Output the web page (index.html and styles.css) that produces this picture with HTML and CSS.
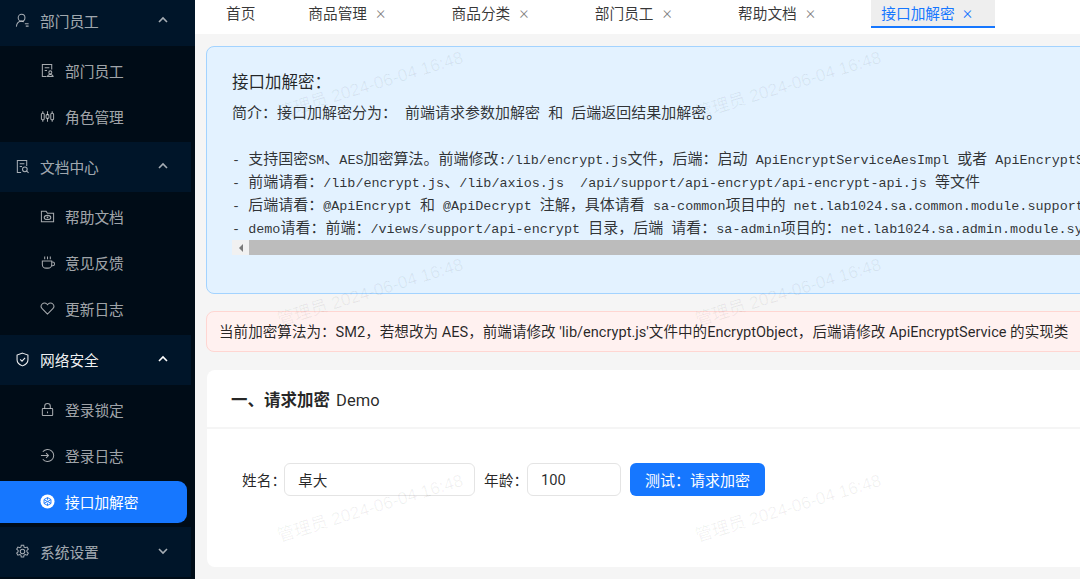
FILE: index.html
```html
<!DOCTYPE html>
<html lang="zh-CN">
<head>
<meta charset="utf-8">
<title>接口加解密</title>
<link rel="stylesheet" href="styles.css">
</head>
<body>
<div class="app">
  <aside class="sider">
    <div class="menu-head menu-head-first">
      <svg class="ico" viewBox="0 0 16 16"><circle cx="7" cy="5" r="3.6"/><path d="M1.5 14.5c.3-3.4 2.4-5.600 5.500-5.600 1 0 1.800.2 2.500.6M10.500 11.500h4M11.500 14h3"/></svg>
      <span class="head-text">部门员工</span>
      <svg class="chev" viewBox="0 0 12 12"><path d="M2 8l4-4 4 4"/></svg>
    </div>
    <div class="menu-list menu-list-short">
      <div class="menu-item"><svg class="ico" viewBox="0 0 16 16"><path d="M7 14.500H2.500v-13h10V7M5 5h5M5 8h2.500"/><circle cx="11" cy="10" r="1.600"/><path d="M8 14.500c.2-1.600 1.300-2.300 3-2.300s2.800.7 3 2.300z"/></svg><span>部门员工</span></div>
      <div class="menu-item"><svg class="ico" viewBox="0 0 16 16"><rect x="1.500" y="4.500" width="3" height="7" rx="1.200"/><rect x="6.500" y="6" width="3" height="4" rx="1"/><rect x="11.500" y="4.500" width="3" height="7" rx="1.200"/><path d="M3 2.500v2M3 11.500v2M8 2.500V6M8 10v3.500M13 2.500v2M13 11.500v2"/></svg><span>角色管理</span></div>
    </div>
    <div class="menu-head">
      <svg class="ico" viewBox="0 0 16 16"><path d="M6.500 14.500h-4v-13h10v6M5 5h5M5 8h2.500"/><circle cx="10.500" cy="11" r="2.500"/><path d="M12.500 13l2 1.800"/></svg>
      <span class="head-text">文档中心</span>
      <svg class="chev" viewBox="0 0 12 12"><path d="M2 8l4-4 4 4"/></svg>
    </div>
    <div class="menu-list">
      <div class="menu-item"><svg class="ico" viewBox="0 0 16 16"><path d="M1.500 13.500v-11h5l1.500 2h6.500v9z"/><ellipse cx="8" cy="9" rx="3.500" ry="2.200"/><circle class="dot" cx="8" cy="9" r=".9"/></svg><span>帮助文档</span></div>
      <div class="menu-item"><svg class="ico" viewBox="0 0 16 16"><path d="M5 1.500v3M8 1.500v3M11 1.500v3M2.500 6.500h10v3.500a4 4 0 0 1-4 4h-2a4 4 0 0 1-4-4zM12.500 7.500h1a1.500 1.500 0 0 1 0 4h-1.300"/></svg><span>意见反馈</span></div>
      <div class="menu-item"><svg class="ico" viewBox="0 0 16 16"><path d="M8 14l-5.700-5.800a3.600 3.600 0 0 1 0-5 3.500 3.500 0 0 1 5 0l.7.800.7-.8a3.500 3.500 0 0 1 5 0 3.600 3.600 0 0 1 0 5z"/></svg><span>更新日志</span></div>
    </div>
    <div class="menu-head menu-head-open">
      <svg class="ico" viewBox="0 0 16 16"><path d="M8 1.200l5.800 2v5.300c0 3.100-2.500 5-5.800 6.300-3.300-1.300-5.800-3.200-5.800-6.300V3.200z"/><path d="M5.500 7.800l2 2 3.200-3.500"/></svg>
      <span class="head-text">网络安全</span>
      <svg class="chev" viewBox="0 0 12 12"><path d="M2 8l4-4 4 4"/></svg>
    </div>
    <div class="menu-list menu-list-short">
      <div class="menu-item"><svg class="ico" viewBox="0 0 16 16"><rect x="2.500" y="7" width="11" height="7.500" rx=".6"/><path d="M5 7V4.500a3 3 0 0 1 6 0V7M8 10v2"/></svg><span>登录锁定</span></div>
      <div class="menu-item"><svg class="ico" viewBox="0 0 16 16"><path d="M3 4a6.500 6.500 0 1 1 0 8M1 8h8M6.500 5.500L9 8l-2.500 2.500"/></svg><span>登录日志</span></div>
      <div class="menu-item menu-item-active"><svg class="ico ico-solid" viewBox="0 0 16 16"><circle cx="8" cy="8" r="7.500"/><path class="cut" d="M8 3.800l3.700 2.100v4.200L8 12.200l-3.700-2.100V5.900zM8 3.800v2.400M8 9.800v2.400M4.300 5.900L8 8.200l3.700-2.300M4.300 10.100L8 7.800l3.700 2.300"/></svg><span>接口加解密</span></div>
    </div>
    <div class="menu-head">
      <svg class="ico" viewBox="0 0 16 16"><path d="M6.700 1.300h2.600l.4 2 1.200.7 2-.7 1.300 2.300-1.500 1.300v1.400l1.500 1.300-1.300 2.300-2-.7-1.200.7-.4 2H6.700l-.4-2-1.200-.7-2 .7-1.300-2.300 1.500-1.300V6.900L1.800 5.600l1.300-2.300 2 .7 1.200-.7z"/><circle cx="8" cy="8" r="2.400"/></svg>
      <span class="head-text">系统设置</span>
      <svg class="chev" viewBox="0 0 12 12"><path d="M2 4l4 4 4-4"/></svg>
    </div>
  </aside>

  <main class="main">
    <nav class="tabs">
      <div class="tab tab-home">首页</div>
      <div class="tab">商品管理<span class="close">×</span></div>
      <div class="tab">商品分类<span class="close">×</span></div>
      <div class="tab">部门员工<span class="close">×</span></div>
      <div class="tab">帮助文档<span class="close">×</span></div>
      <div class="tab tab-active">接口加解密<span class="close">×</span></div>
    </nav>

    <div class="content">
      <section class="info">
        <h4 class="info-title">接口加解密&#xFF1A;</h4>
        <div class="code">
          <div class="code-line"><span class="cn">简介&#xFF1A;接口加解密分为&#xFF1A;</span> <span class="cn">前端请求参数加解密</span> <span class="cn">和</span> <span class="cn">后端返回结果加解密。</span></div>
          <div class="code-line"></div>
          <div class="code-line">- <span class="cn">支持国密</span>SM<span class="cn">、</span>AES<span class="cn">加密算法。前端修改</span>:/lib/encrypt.js<span class="cn">文件&#xFF0C;后端&#xFF1A;启动</span> ApiEncryptServiceAesImpl <span class="cn">或者</span> ApiEncryptServiceSm2Impl</div>
          <div class="code-line">- <span class="cn">前端请看&#xFF1A;</span>/lib/encrypt.js<span class="cn">、</span>/lib/axios.js  /api/support/api-encrypt/api-encrypt-api.js <span class="cn">等文件</span></div>
          <div class="code-line">- <span class="cn">后端请看&#xFF1A;</span>@ApiEncrypt <span class="cn">和</span> @ApiDecrypt <span class="cn">注解&#xFF0C;具体请看</span> sa-common<span class="cn">项目中的</span> net.lab1024.sa.common.module.support.apiencrypt</div>
          <div class="code-line">- demo<span class="cn">请看&#xFF1A;前端&#xFF1A;</span>/views/support/api-encrypt <span class="cn">目录&#xFF0C;后端</span> <span class="cn">请看&#xFF1A;</span>sa-admin<span class="cn">项目的&#xFF1A;</span>net.lab1024.sa.admin.module.system.support</div>
        </div>
        <div class="hbar"><span class="hbar-btn"><i class="hbar-arrow"></i></span><span class="hbar-thumb"></span></div>
      </section>

      <section class="danger">当前加密算法为&#xFF1A;SM2&#xFF0C;若想改为 AES&#xFF0C;前端请修改 'lib/encrypt.js'文件中的EncryptObject&#xFF0C;后端请修改 ApiEncryptService 的实现类</section>

      <section class="card">
        <header class="card-head"><strong>一、请求加密</strong> Demo</header>
        <form class="card-body">
          <label class="field-label">姓名&#xFF1A;</label>
          <input class="input input-name" value="卓大">
          <label class="field-label field-label-age">年龄&#xFF1A;</label>
          <input class="input input-age" value="100">
          <button class="btn" type="button">测试&#xFF1A;请求加密</button>
        </form>
      </section>
    </div>
  </main>

  <div class="wm wm-a1">管理员 2024-06-04 16:48</div>
  <div class="wm wm-a2">管理员 2024-06-04 16:48</div>
  <div class="wm wm-b1">管理员 2024-06-04 16:48</div>
  <div class="wm wm-b2">管理员 2024-06-04 16:48</div>
  <div class="wm wm-c1">管理员 2024-06-04 16:48</div>
  <div class="wm wm-c2">管理员 2024-06-04 16:48</div>
</div>
</body>
</html>
```

FILE: styles.css
```css
* { box-sizing: border-box; }
html, body { margin: 0; height: 100%; overflow: hidden; }
body {
  font-family: Roboto, "Noto Sans CJK SC", sans-serif;
  font-size: 14.7px;
  color: rgba(0, 0, 0, .85);
  background: #f5f5f5;
}
.app { position: relative; display: flex; width: 1080px; height: 579px; overflow: hidden; }

/* sidebar */
.sider { flex: 0 0 195px; height: 579px; background: #000c17; overflow: hidden; color: rgba(255, 255, 255, .65); }
.menu-head {
  display: flex; align-items: center; height: 50px; margin-right: 4px; padding-left: 15px;
  padding-bottom: 2px; background: #001529;
}
.menu-head-first { margin-top: -4px; margin-right: 0; }
.menu-head-open { color: rgba(255, 255, 255, .95); }
.head-text { margin-left: 10px; flex: 1; }
.ico { flex: 0 0 15px; width: 15px; height: 15px; fill: none; stroke: currentColor; stroke-width: 1.1; overflow: visible; }
.ico .dot { fill: currentColor; stroke: none; }
.chev { width: 12px; height: 12px; margin-right: 22px; fill: none; stroke: currentColor; stroke-width: 1.6; }
.menu-head-first .chev { margin-right: 26px; }
.menu-head-open .chev { stroke: #fff; }
.menu-list { display: flex; flex-direction: column; gap: 4px; padding: 4px 8px 5px 0; }
.menu-list-short { padding-bottom: 4px; }
.menu-item { display: flex; align-items: center; height: 42px; padding-left: 40px; padding-bottom: 2px; }
.menu-item span { margin-left: 10px; }
.menu-item-active { background: #1677ff; color: #fff; border-radius: 0 9px 9px 0; }
.ico-solid { fill: #fff; stroke: none; }
.ico-solid .cut { fill: none; stroke: #1677ff; stroke-width: 1; }

/* tabs */
.main { flex: 1; min-width: 0; overflow: hidden; }
.tabs { display: flex; gap: 19.25px; height: 34px; padding-left: 21px; background: #fff; }
.tab { position: relative; flex: 0 0 124px; height: 28px; padding-left: 10px; line-height: 29px; color: rgba(0, 0, 0, .78); white-space: nowrap; }
.tab-home { flex-basis: 63px; }
.tab-active { background: #eeeeee; border-bottom: 2px solid #1677ff; color: #1677ff; }
.close { margin-left: 9px; font-size: 18px; font-weight: 300; color: rgba(0, 0, 0, .5); line-height: 1; }
.tab-active .close { margin-left: 8px; color: #1677ff; }

/* content */
.content { display: flex; flex-direction: column; width: 1060px; padding: 12px 0 0 11px; }
.info {
  height: 248px; padding: 25px 25px 0;
  background: #e3f2ff; border: 1px solid #a3d3ff; border-radius: 8px; overflow: hidden;
}
.info-title { margin: 0; font-size: 16.5px; font-weight: 400; line-height: 22px; color: rgba(0, 0, 0, .85); }
.code {
  margin: 8px 0 0; height: 138px; overflow: hidden;
  font-family: "Liberation Mono", monospace; font-size: 13.45px;
  color: rgba(0, 0, 0, .8);
}
.code-line { height: 23px; line-height: 23px; white-space: pre; }
.cn { font-family: "Noto Sans CJK SC", sans-serif; font-size: 15px; line-height: 20px; }
.hbar { display: flex; height: 15px; background: #f1f1f1; }
.hbar-btn { display: flex; align-items: center; justify-content: center; flex: 0 0 17px; }
.hbar-arrow { width: 0; height: 0; border: 4px solid transparent; border-left-width: 0; border-right: 4px solid #7a7a7a; }
.hbar-thumb { flex: 1; background: #bcbcbc; }

.danger {
  height: 41px; margin-top: 17px; padding-left: 12px; line-height: 41px; white-space: nowrap; font-size: 14.58px;
  background: #fff1f0; border: 1px solid #ffd6d2; border-radius: 8px; color: rgba(0, 0, 0, .85);
}

.card { height: 197px; margin-top: 18px; margin-left: 1px; background: #fff; border-radius: 8px; overflow: hidden; }
.card-head { height: 59px; padding-left: 24px; line-height: 61px; font-size: 16.5px; border-bottom: 2px solid #f5f5f5; }
.card-head strong { font-weight: 700; margin-right: 2px; }
.card-body { display: flex; align-items: center; padding: 34px 0 0 35px; }
.field-label { flex: 0 0 42px; min-width: 0; white-space: nowrap; }
.field-label-age { flex-basis: 43px; margin-left: 9px; }
.input {
  height: 33px; padding: 0 13px; font: inherit; color: rgba(0, 0, 0, .85);
  background: #fff; border: 1px solid #e4e4e4; border-radius: 6px; outline: none;
}
.input-name { width: 191px; }
.input-age { width: 94px; }
.btn {
  width: 135px; height: 33px; margin-left: 9px; padding: 0; font: inherit; font-size: 15px; color: #fff;
  background: #1677ff; border: 0; border-radius: 6px;
}

/* watermark */
.wm {
  position: absolute; width: 220px; text-align: center; pointer-events: none; white-space: nowrap;
  font-family: "Liberation Sans", "Noto Sans CJK SC", sans-serif; font-size: 17.3px;
  line-height: 20px; color: rgba(0, 0, 0, .06); transform: rotate(-17deg);
}
.wm-a1 { left: 260px; top: 75px; }
.wm-a2 { left: 678px; top: 75px; }
.wm-b1 { left: 260px; top: 282px; }
.wm-b2 { left: 678px; top: 282px; }
.wm-c1 { left: 260px; top: 498px; }
.wm-c2 { left: 678px; top: 498px; }
```
